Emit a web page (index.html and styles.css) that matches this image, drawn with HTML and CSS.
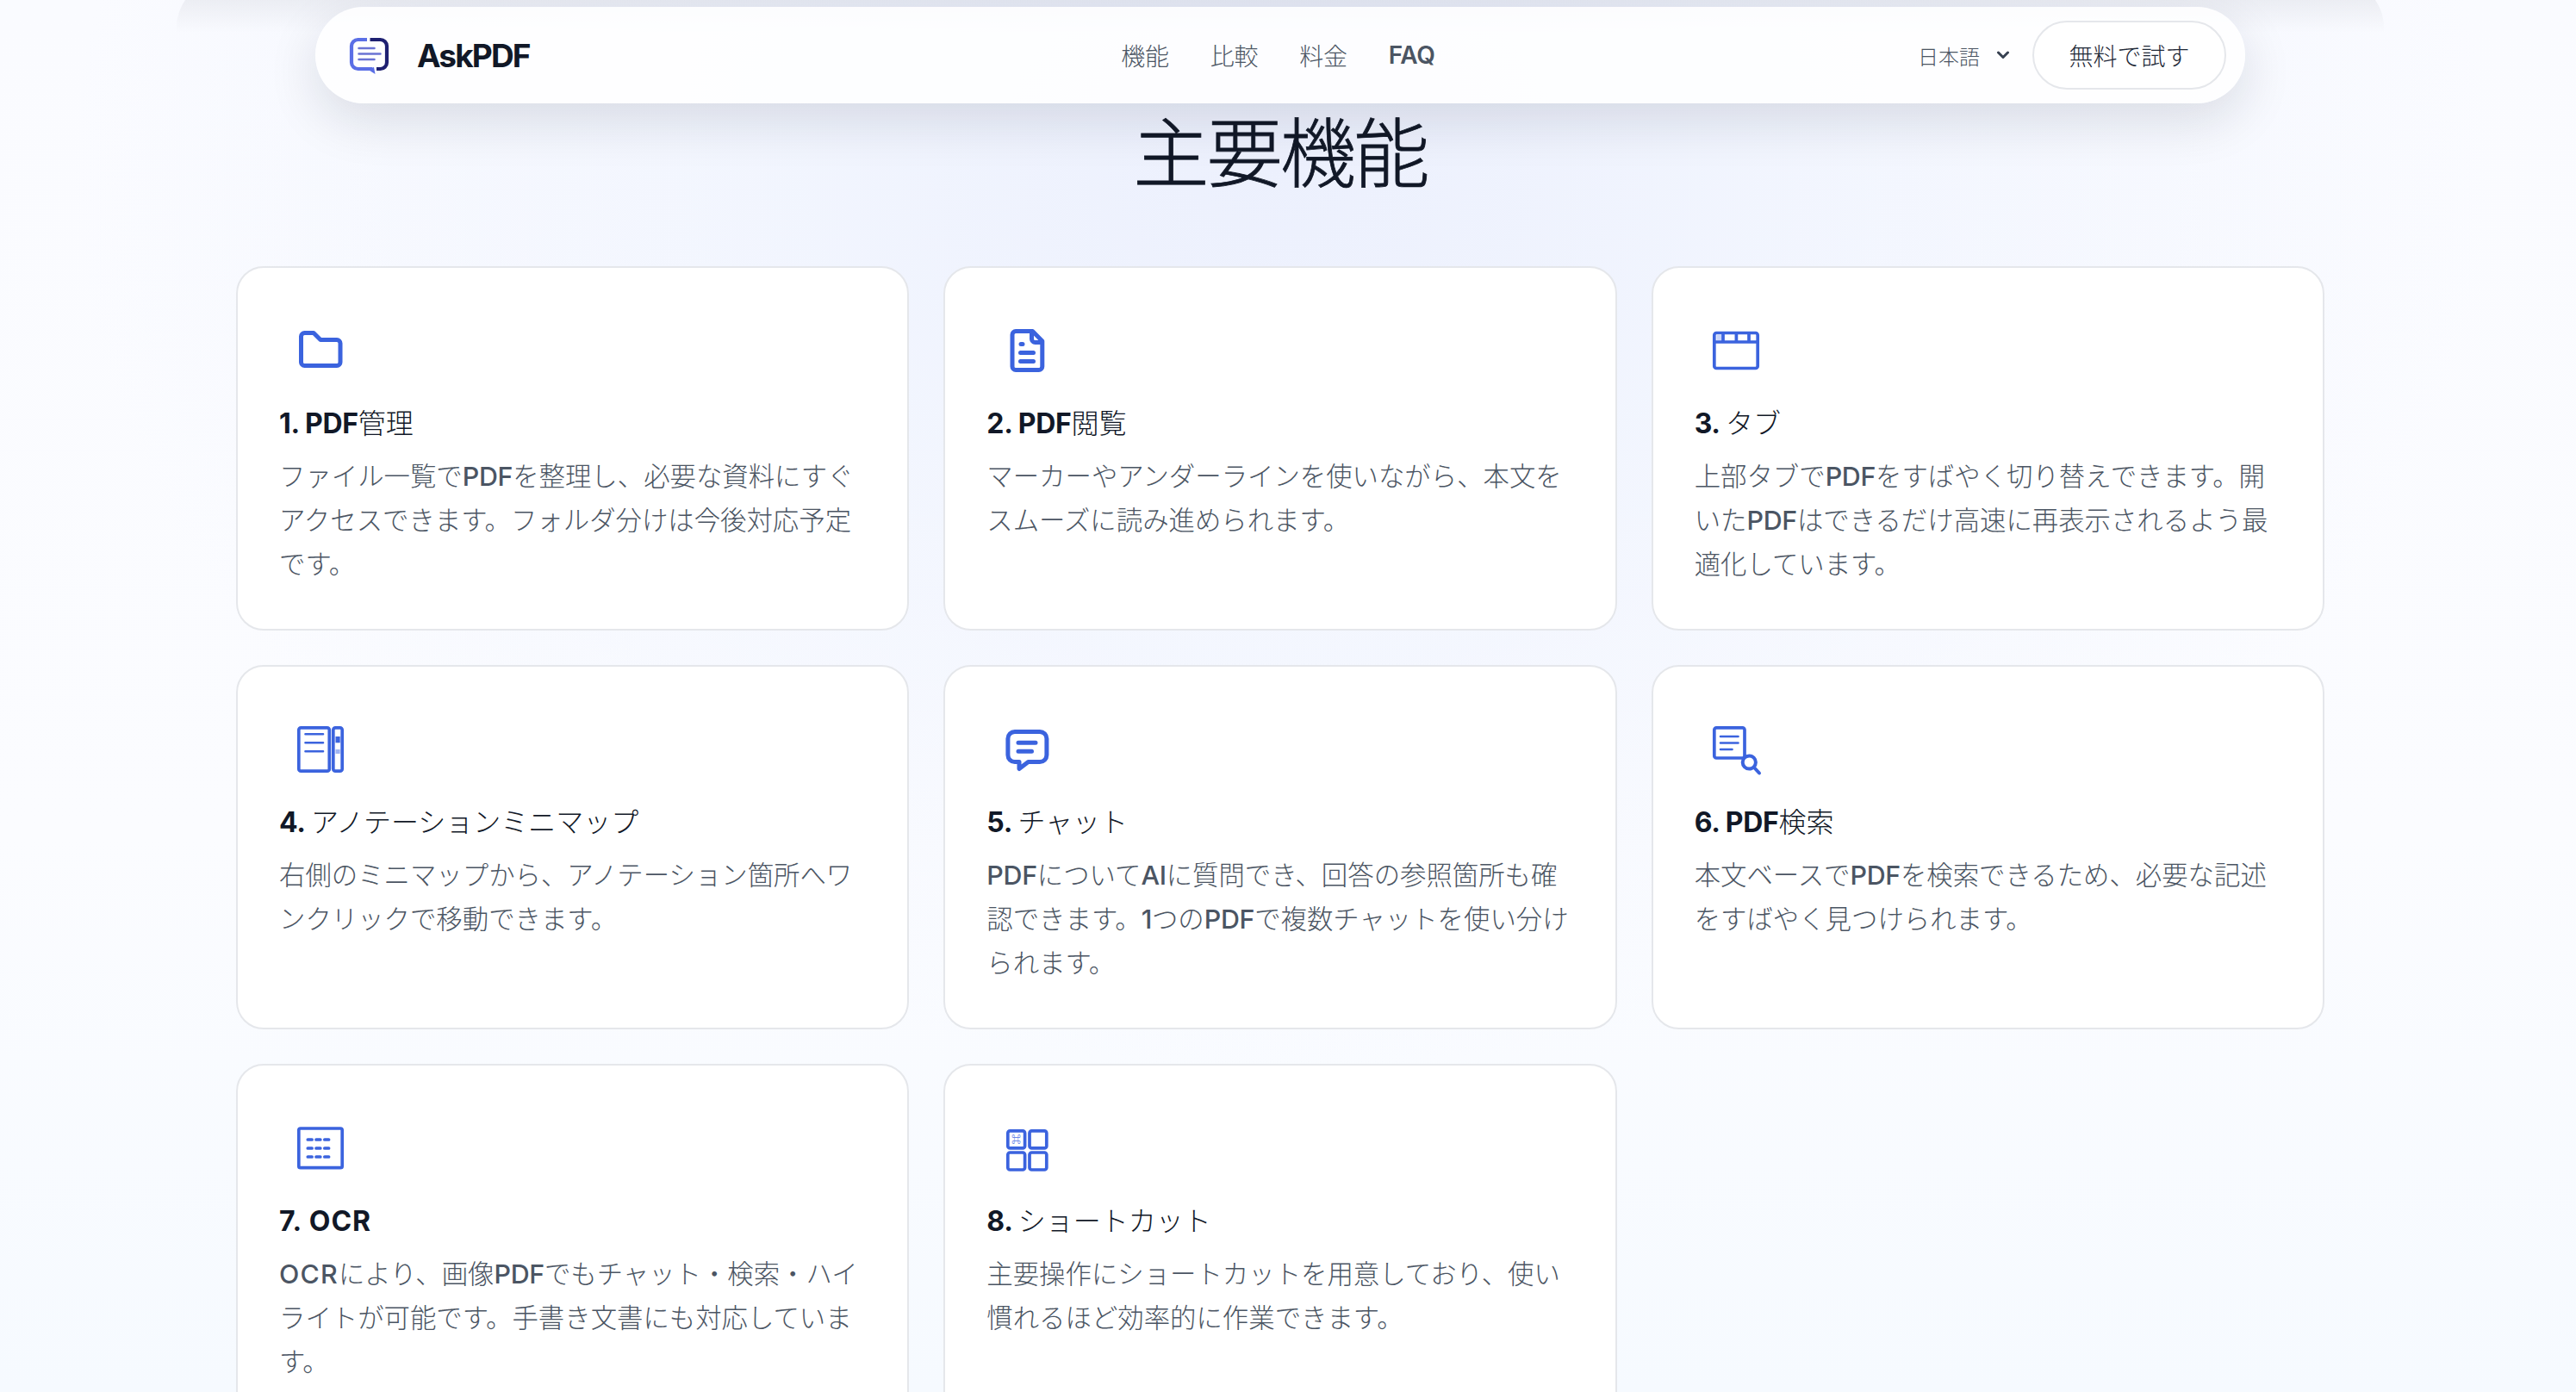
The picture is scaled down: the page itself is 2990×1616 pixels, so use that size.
FILE: index.html
```html
<!DOCTYPE html>
<html lang="ja">
<head>
    <meta charset="UTF-8">
    <meta name="viewport" content="width=device-width, initial-scale=1.0">
    <title>AskPDF</title>
    <link rel="stylesheet" href="styles.css">
</head>
<body>

    <!-- ナビゲーション -->
    <header class="nav">
        <a class="logo" href="#">
            <svg class="logo-icon" viewBox="0 0 48 44" fill="none">
                <path d="M22 4H11.500a7.500 7.500 0 0 0-7.500 7.500v19a7.500 7.500 0 0 0 7.500 7.500H28" stroke="#5b6fe6" stroke-width="4.200"/>
                <path d="M22 38l9.500 6-1.500-8z" fill="#5b6fe6"/>
                <path d="M25.500 4h12a7.500 7.500 0 0 1 7.500 7.500v19a7.500 7.500 0 0 1-7.500 7.500h-4.500" stroke="#1e2071" stroke-width="4.200"/>
                <path d="M12.500 14h18M12.500 20.500h25M12.500 27h18" stroke="#6a73d4" stroke-width="2.500" stroke-linecap="round"/>
            </svg>
            <span>AskPDF</span>
        </a>
        <nav class="links">
            <a href="#features">機能</a>
            <a href="#compare">比較</a>
            <a href="#pricing">料金</a>
            <a class="en" href="#faq">FAQ</a>
        </nav>
        <div class="acciones">
            <span class="idioma">日本語
                <svg class="chevron" viewBox="0 0 16 10" fill="none" stroke="#374151" stroke-width="3" stroke-linecap="round" stroke-linejoin="round"><path d="M2.500 2l5.500 5.500L13.500 2"/></svg>
            </span>
            <a class="boton" href="#">無料で試す</a>
        </div>
    </header>

    <!-- 主要機能 -->
    <main class="features" id="features">
        <h1>主要機能</h1>
        <div class="grid">
            <article class="card">
                <svg class="icon" viewBox="0 0 96 96" stroke-width="5">
                    <path d="M25.500 31.500a4 4 0 0 1 4-4H40l8 8h19a4 4 0 0 1 4 4v22a4 4 0 0 1-4 4H29.500a4 4 0 0 1-4-4z"/>
                </svg>
                <h2><b>1. PDF</b>管理</h2>
                <p>ファイル一覧で<b>PDF</b>を整理し、必要な資料にすぐアクセスできます。フォルダ分けは今後対応予定です。</p>
            </article>
            <article class="card">
                <svg class="icon" viewBox="0 0 96 96" stroke-width="5">
                    <path d="M34 25.500h19.500L64.800 37v29.500a4 4 0 0 1-4 4H34a4 4 0 0 1-4-4v-37a4 4 0 0 1 4-4z"/>
                    <path d="M52.500 26v8.500a4 4 0 0 0 4 4h8M40 40.500h2M39.500 50.500h15M39.500 60.500h15"/>
                </svg>
                <h2><b>2. PDF</b>閲覧</h2>
                <p>マーカーやアンダーラインを使いながら、本文をスムーズに読み進められます。</p>
            </article>
            <article class="card">
                <svg class="icon" viewBox="0 0 96 96" stroke-width="3.700">
                    <rect class="tenue" x="25.500" y="30" width="6" height="6.500"/>
                    <rect x="22.800" y="27.500" width="50.400" height="41" rx="2.500"/>
                    <path d="M23 38h50M33 28v10M48.400 28v10M63 28v10" stroke-linecap="butt"/>
                </svg>
                <h2><b>3. </b>タブ</h2>
                <p>上部タブで<b>PDF</b>をすばやく切り替えできます。開いた<b>PDF</b>はできるだけ高速に再表示されるよう最適化しています。</p>
            </article>
            <article class="card">
                <svg class="icon" viewBox="0 0 96 96" stroke-width="3.700">
                    <rect x="22.800" y="22.800" width="35.500" height="50.400" rx="2.500"/>
                    <rect x="62.800" y="22.800" width="10.400" height="50.400" rx="2.500"/>
                    <path d="M30.500 30.300h20.500M30.500 40.300h20.500M30.500 50.300h20.500" stroke-width="2.600"/>
                    <rect class="lleno" x="65.500" y="33" width="5.200" height="7.300"/>
                    <rect class="medio" x="65.500" y="48" width="5.200" height="5"/>
                </svg>
                <h2><b>4. </b>アノテーションミニマップ</h2>
                <p>右側のミニマップから、アノテーション箇所へワンクリックで移動できます。</p>
            </article>
            <article class="card">
                <svg class="icon" viewBox="0 0 96 96" stroke-width="5">
                    <path d="M32.900 27.500h29a8 8 0 0 1 8 8v19a8 8 0 0 1-8 8H48.500l-10.500 8v-8h-5.100a8 8 0 0 1-8-8v-19a8 8 0 0 1 8-8z"/>
                    <path d="M37 40.300h20M37 50.300h15.500"/>
                </svg>
                <h2><b>5. </b>チャット</h2>
                <p><b>PDF</b>について<b>AI</b>に質問でき、回答の参照箇所も確認できます。<b>1</b>つの<b>PDF</b>で複数チャットを使い分けられます。</p>
            </article>
            <article class="card">
                <svg class="icon" viewBox="0 0 96 96" stroke-width="3.700">
                    <rect x="22.800" y="22.800" width="35.200" height="35.200" rx="2.500"/>
                    <path d="M30 33h20.500M30 40.500h20.500M30 48h13.500" stroke-width="2.600"/>
                    <circle class="lupa" cx="63.300" cy="63" r="7.600" stroke-width="4"/>
                    <path d="M69 69l6 6.500" stroke-width="4"/>
                </svg>
                <h2><b>6. PDF</b>検索</h2>
                <p>本文ベースで<b>PDF</b>を検索できるため、必要な記述をすばやく見つけられます。</p>
            </article>
            <article class="card">
                <svg class="icon" viewBox="0 0 96 96" stroke-width="3.700">
                    <rect x="22.800" y="25" width="50.400" height="45.700" rx="2"/>
                    <path d="M33.300 38h4.800M43 38h4.800M52.800 38h4.800M33.300 48h4.800M43 48h4.800M52.800 48h4.800M33.300 58h4.800M43 58h4.800M52.800 58h4.800"/>
                </svg>
                <h2><b class="ancho">7. OCR</b></h2>
                <p><b class="ancho">OCR</b>により、画像<b>PDF</b>でもチャット・検索・ハイライトが可能です。手書き文書にも対応しています。</p>
            </article>
            <article class="card">
                <svg class="icon" viewBox="0 0 96 96" stroke-width="3.700">
                    <rect x="24.800" y="27.900" width="19.800" height="20" rx="2.500"/>
                    <rect x="50" y="27.900" width="19.800" height="20" rx="2.500"/>
                    <rect x="24.800" y="53" width="19.800" height="20" rx="2.500"/>
                    <rect x="50" y="53" width="19.800" height="20" rx="2.500"/>
                    <text class="cmd" x="34.700" y="41.500">⌘</text>
                </svg>
                <h2><b>8. </b>ショートカット</h2>
                <p>主要操作にショートカットを用意しており、使い慣れるほど効率的に作業できます。</p>
            </article>
        </div>
    </main>

</body>
</html>
```
FILE: styles.css
```css
* {
    box-sizing: border-box;
}

body {
    position: relative;
    margin: 0;
    padding-right: 18px;
    height: 1616px;
    overflow: hidden;
    font-family: Inter, "Noto Sans CJK JP", sans-serif;
    font-weight: 300;
    color: #4b5563;
    background:
        radial-gradient(ellipse 1400px 1050px at 1486px 190px, #ecf0fd 0%, rgba(240, 244, 254, 0.85) 40%, rgba(249, 251, 255, 0) 100%),
        linear-gradient(#fafbff 0%, #fbfcff 60%, #f6faff 100%);
}

/* sombra superior del contenedor */
body::before {
    content: "";
    position: absolute;
    top: -24px;
    left: 205px;
    width: 2562px;
    height: 1400px;
    border-radius: 56px 56px 0 0;
    background: linear-gradient(rgba(15, 23, 42, 0.055) 24px, rgba(15, 23, 42, 0.03) 40px, rgba(15, 23, 42, 0) 62px);
}

a {
    color: inherit;
    text-decoration: none;
}

.nav {
    position: relative;
    z-index: 2;
    display: flex;
    align-items: center;
    justify-content: space-between;
    width: 2240px;
    height: 112px;
    margin: 8px auto 0;
    padding: 0 22px 0 38px;
    border-radius: 56px;
    background: rgba(255, 255, 255, 0.85);
    box-shadow: 0 20px 60px rgba(15, 23, 42, 0.12);
}

.logo {
    display: flex;
    align-items: center;
    gap: 32px;
    width: 797px;
    font-size: 37px;
    font-weight: 700;
    letter-spacing: -0.05em;
    color: #111827;
}

.logo-icon {
    width: 48px;
    height: 44px;
}

.links {
    display: flex;
    align-items: center;
    gap: 48px;
    font-size: 28px;
    letter-spacing: -0.01em;
}

.en {
    font-weight: 600;
}

.acciones {
    display: flex;
    align-items: center;
    justify-content: flex-end;
    gap: 26px;
    width: 818px;
}

.idioma {
    display: flex;
    align-items: center;
    gap: 19px;
    font-size: 24px;
}

.chevron {
    width: 16px;
    height: 10px;
}

.boton {
    display: flex;
    align-items: center;
    justify-content: center;
    width: 225px;
    height: 80px;
    border: 2px solid #e5e7eb;
    border-radius: 40px;
    background: #fff;
    font-size: 28px;
    color: #1f2937;
}

.features {
    position: relative;
    width: 2424px;
    margin: 0 auto;
}

h1 {
    margin: 0;
    padding-top: 2px;
    height: 189px;
    font-size: 88px;
    font-weight: 300;
    line-height: 112px;
    letter-spacing: -0.03em;
    text-align: center;
    color: #111827;
    -webkit-text-stroke: 0.8px #111827;
}

.grid {
    display: grid;
    grid-template-columns: repeat(3, 1fr);
    gap: 40px;
}

.card {
    height: 423px;
    padding: 48px;
    border: 2px solid #e5e7eb;
    border-radius: 32px;
    background: #fff;
}

.icon {
    display: block;
    width: 96px;
    height: 96px;
    fill: none;
    stroke: #3b63de;
    stroke-linecap: round;
    stroke-linejoin: round;
}

.icon .tenue {
    fill: #c9d5fa;
    stroke: none;
}

.icon .lleno {
    fill: #3b63de;
    stroke: none;
}

.icon .medio {
    fill: #a0b4f2;
    stroke: none;
}

.icon .lupa {
    fill: #fff;
}

.icon .cmd {
    font-family: "DejaVu Sans", sans-serif;
    font-size: 11px;
    text-anchor: middle;
    fill: #6d8ae8;
    stroke: none;
}

h2 {
    margin: 16px 0 15px;
    font-size: 32px;
    font-weight: 300;
    line-height: 42px;
    color: #111827;
}

h2 b {
    font-weight: 700;
    letter-spacing: -0.01em;
}

p {
    margin: 0;
    font-size: 30.4px;
    line-height: 51.2px;
}

p b {
    font-weight: 500;
    letter-spacing: -0.01em;
}

h2 .ancho {
    letter-spacing: 0.03em;
}

p .ancho {
    letter-spacing: 0.04em;
}
```
